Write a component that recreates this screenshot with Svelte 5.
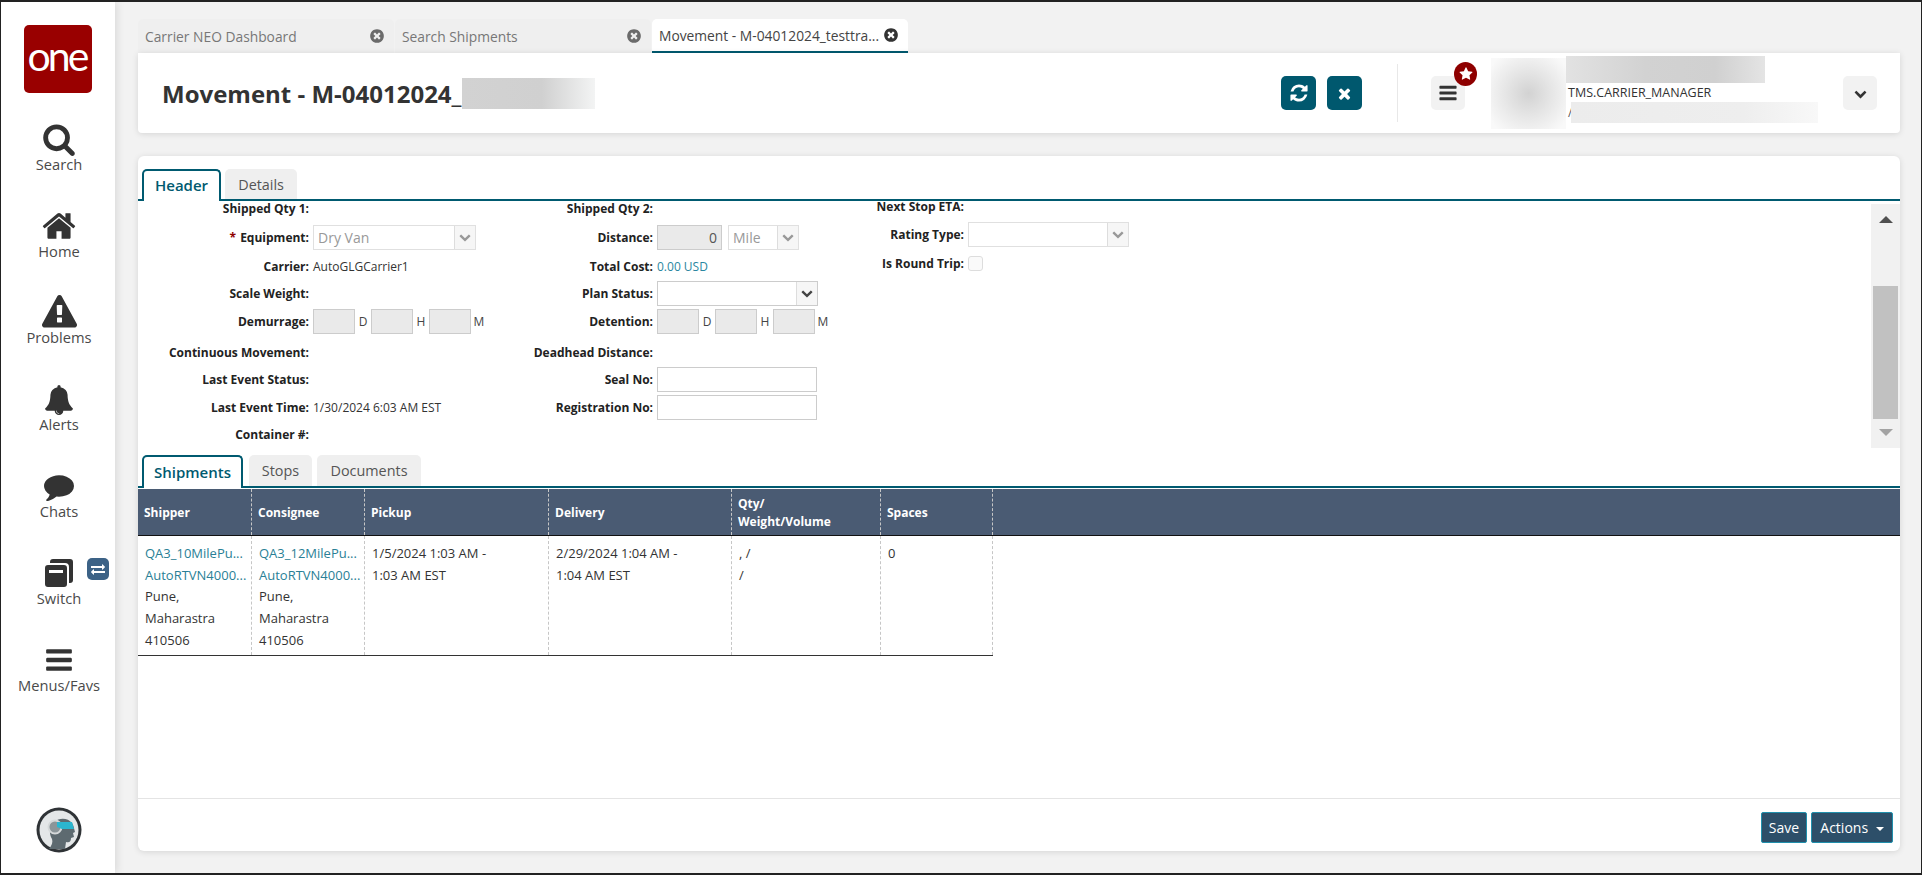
<script>
    const icons = {
        search: 'M1216 832q0-185-131.500-316.500t-316.500-131.500-316.500 131.500-131.500 316.500 131.500 316.500 316.500 131.500 316.500-131.500 131.500-316.500zm512 832q0 52-38 90t-90 38q-54 0-90-38l-343-342q-179 124-399 124-143 0-273.500-55.500t-225-150-150-225-55.500-273.500 55.500-273.500 150-225 225-150 273.500-55.500 273.500 55.500 225 150 150 225 55.500 273.500q0 220-124 399l343 343q37 37 37 90z',
        home: 'M1472 992v480q0 26-19 45t-45 19h-384v-384h-256v384h-384q-26 0-45-19t-19-45v-480q0-1 .5-3t.5-3l575-474 575 474q1 2 1 6zm223-69l-62 74q-8 9-21 11h-3q-13 0-21-7l-692-577-692 577q-12 8-24 7-13-2-21-11l-62-74q-8-10-7-23.500t11-21.500l719-599q32-26 76-26t76 26l244 204v-195q0-14 9-23t23-9h192q14 0 23 9t9 23v408l219 182q10 8 11 21.500t-7 23.500z',
        warning: 'M1024 1375v-190q0-14-9.500-23.500t-22.500-9.500h-192q-13 0-22.500 9.500t-9.500 23.500v190q0 14 9.500 23.500t22.500 9.500h192q13 0 22.500-9.500t9.500-23.500zm-2-374l18-459q0-12-10-19-13-11-24-11h-220q-11 0-24 11-10 7-10 21l17 457q0 10 10 16.500t24 6.500h185q14 0 23.500-6.500t10.500-16.500zm-14-934l768 1408q35 63-2 126-17 29-46.500 46t-63.500 17h-1536q-34 0-63.500-17t-46.500-46q-37-63-2-126l768-1408q17-31 47-49t65-18 65 18 47 49z',
        bell: 'M912 1696q0-16-16-16-59 0-101.500-42.500t-42.500-101.500q0-16-16-16t-16 16q0 73 51.500 124.500t124.500 51.500q16 0 16-16zm816-288q0 52-38 90t-90 38h-448q0 106-75 181t-181 75-181-75-75-181h-448q-52 0-90-38t-38-90q50-42 91-88t85-119.500 74.500-158.500 50-206 19.500-260q0-152 117-282.500t307-158.500q-8-19-8-39 0-40 28-68t68-28 68 28 28 68q0 20-8 39 190 28 307 158.500t117 282.500q0 139 19.500 260t50 206 74.500 158.500 85 119.500 91 88z',
        comment: 'M1792 896q0 174-120 321.500t-326 233-450 85.500q-70 0-145-8-198 175-460 242-49 14-114 22-17 2-30.500-9t-17.500-29v-1q-3-4-.5-12t2-10 4.500-9.500l6-9 7-8.500 8-9q7-8 31-34.500t34.500-38 31-39.500 32.500-51 27-59 26-76q-157-89-247.500-220t-90.500-281q0-130 71-248.500t191-204.500 286-136.500 348-50.500q244 0 450 85.500t326 233 120 321.500z',
        bars: 'M1664 1344v128q0 26-19 45t-45 19h-1408q-26 0-45-19t-19-45v-128q0-26 19-45t45-19h1408q26 0 45 19t19 45zm0-512v128q0 26-19 45t-45 19h-1408q-26 0-45-19t-19-45v-128q0-26 19-45t45-19h1408q26 0 45 19t19 45zm0-512v128q0 26-19 45t-45 19h-1408q-26 0-45-19t-19-45v-128q0-26 19-45t45-19h1408q26 0 45 19t19 45z',
        refresh: 'M1639 1056q0 5-1 7-64 268-268 434.500t-478 166.500q-146 0-282.500-55t-243.500-157l-129 129q-19 19-45 19t-45-19-19-45v-448q0-26 19-45t45-19h448q26 0 45 19t19 45-19 45l-137 137q71 66 161 102t187 36q134 0 250-65t186-179q11-17 53-117 8-23 30-23h192q13 0 22.500 9.500t9.500 22.500zm25-800v448q0 26-19 45t-45 19h-448q-26 0-45-19t-19-45 19-45l138-138q-148-137-349-137-134 0-250 65t-186 179q-11 17-53 117-8 23-30 23h-199q-13 0-22.500-9.500t-9.500-22.500v-7q65-268 270-434.500t480-166.500q146 0 284 55.500t245 156.500l130-129q19-19 45-19t45 19 19 45z',
        times: 'M1490 1322q0 40-28 68l-136 136q-28 28-68 28t-68-28l-294-294-294 294q-28 28-68 28t-68-28l-136-136q-28-28-28-68t28-68l294-294-294-294q-28-28-28-68t28-68l136-136q28-28 68-28t68 28l294 294 294-294q28-28 68-28t68 28l136 136q28 28 28 68t-28 68l-294 294 294 294q28 28 28 68z',
        star: 'M1728 647q0 22-26 48l-363 354 86 500q1 7 1 20 0 21-10.500 35.500t-30.500 14.500q-19 0-40-12l-449-236-449 236q-22 12-40 12-21 0-31.500-14.500t-10.500-35.500q0-6 2-20l86-500-364-354q-25-27-25-48 0-37 56-46l502-73 225-455q19-41 49-41t49 41l225 455 502 73q56 9 56 46z',
        chevron: 'M1683 808l-742 741q-19 19-45 19t-45-19l-742-741q-19-19-19-45.500t19-45.500l166-165q19-19 45-19t45 19l531 531 531-531q19-19 45-19t45 19l166 165q19 19 19 45.500t-19 45.500z',
        timesCircle: 'M1277 1122q0-26-19-45l-181-181 181-181q19-19 19-45 0-27-19-46l-90-90q-19-19-46-19-26 0-45 19l-181 181-181-181q-19-19-45-19-27 0-46 19l-90 90q-19 19-19 46 0 26 19 45l181 181-181 181q-19 19-19 45 0 27 19 46l90 90q19 19 46 19 26 0 45-19l181-181 181 181q19 19 45 19 27 0 46-19l90-90q19-19 19-46zm387-226q0 209-103 385.500t-279.500 279.500-385.500 103-385.500-103-279.500-279.500-103-385.500 103-385.500 279.500-279.500 385.500-103 385.500 103 279.500 279.500 103 385.500z',
        exchange: 'M1792 1184v192q0 13-9.500 22.500t-22.500 9.500h-1376v192q0 13-9.500 22.500t-22.500 9.500q-12 0-24-10l-319-320q-9-9-9-22 0-14 9-23l320-320q9-9 23-9 13 0 22.500 9.500t9.500 22.500v192h1376q13 0 22.500 9.500t9.500 22.500zm0-544q0 14-9 23l-320 320q-9 9-23 9-13 0-22.500-9.500t-9.500-22.500v-192h-1376q-13 0-22.500-9.500t-9.500-22.500v-192q0-13 9.500-22.500t22.500-9.500h1376v-192q0-14 9-23t23-9q12 0 24 10l319 319q9 9 9 23z'
    };

    const navItems = [
        { id: 'search', label: 'Search', icon: icons.search, size: 34 },
        { id: 'home', label: 'Home', icon: icons.home, size: 36 },
        { id: 'problems', label: 'Problems', icon: icons.warning, size: 35 },
        { id: 'alerts', label: 'Alerts', icon: icons.bell, size: 30 },
        { id: 'chats', label: 'Chats', icon: icons.comment, size: 30 },
        { id: 'switch', label: 'Switch', icon: null, size: 30 },
        { id: 'menus', label: 'Menus/Favs', icon: icons.bars, size: 30 }
    ];

    const pageTabs = [
        { label: 'Carrier NEO Dashboard' },
        { label: 'Search Shipments' },
        { label: 'Movement - M-04012024_testtra...', active: true }
    ];

    const columns = ['Shipper', 'Consignee', 'Pickup', 'Delivery', 'Qty/\nWeight/Volume', 'Spaces'];
</script>

{#snippet icon(d, size)}
    <svg class="fa" width={size} height={size} viewBox="0 0 1792 1792" aria-hidden="true"><path d={d} /></svg>
{/snippet}

{#snippet combo(value, cls)}
    <div class="combo {cls}">
        <span class="combo-value">{value}</span>
        <span class="combo-btn">{@render icon(icons.chevron, 12)}</span>
    </div>
{/snippet}

{#snippet duration()}
    <div class="duration">
        <span class="box ro short"></span><span class="unit">D</span>
        <span class="box ro short"></span><span class="unit">H</span>
        <span class="box ro short"></span><span class="unit">M</span>
    </div>
{/snippet}

<div class="frame">
    <aside class="sidebar">
        <div class="logo"><span>one</span></div>
        <nav class="nav">
            {#each navItems as item}
                <a class="nav-item" href="#{item.id}" id="nav-{item.id}">
                    <span class="nav-icon nav-icon-{item.id}">
                        {#if item.icon}
                            {@render icon(item.icon, item.size)}
                        {:else}
                            <svg width="30" height="30" viewBox="0 0 30 30" aria-hidden="true">
                                <path fill="#333" d="M9 1h17a3 3 0 0 1 3 3v18a3 3 0 0 1-3 3h-1V9a4 4 0 0 0-4-4H6V4a3 3 0 0 1 3-3z" />
                                <path fill="#333" fill-rule="evenodd" d="M4 7h16a3 3 0 0 1 3 3v16a3 3 0 0 1-3 3H4a3 3 0 0 1-3-3V10a3 3 0 0 1 3-3zm1 5v3h14v-3z" />
                            </svg>
                        {/if}
                    </span>
                    <span class="nav-label">{item.label}</span>
                    {#if item.id === 'switch'}
                        <span class="switch-badge">{@render icon(icons.exchange, 14)}</span>
                    {/if}
                </a>
            {/each}
        </nav>
        <div class="spacer"></div>
        <svg class="bot" width="46" height="46" viewBox="0 0 46 46" aria-hidden="true">
            <circle cx="23" cy="23" r="22.5" fill="#2f3336" />
            <circle cx="23" cy="23" r="19.500" fill="#e4e7e8" />
            <path fill="#5d6a70" d="M13 42c3-4 4-7 3-10-3-5-3-12 2-17 6-5 14-4 18 1 2 3 2 6 3 9l-2 1 1 4-3 1c0 3-1 5-5 4l-1 7z" />
            <circle cx="19" cy="20" r="6.500" fill="#8b9599" stroke="#d5d9da" stroke-width="2" />
            <path fill="#2bb6cf" d="M21 15h15l2 7H26l-5-2z" />
        </svg>
    </aside>

    <main class="main">
        <div class="page-tabs">
            {#each pageTabs as tab}
                <div class="page-tab" class:active={tab.active}>
                    <span>{tab.label}</span>
                    {@render icon(icons.timesCircle, 16)}
                </div>
            {/each}
        </div>

        <header class="head-card">
            <h1 class="title">Movement - M-04012024_<span class="smudge title-smudge"></span></h1>
            <div class="head-actions">
                <button class="teal-btn">{@render icon(icons.refresh, 20)}</button>
                <button class="teal-btn">{@render icon(icons.times, 17)}</button>
            </div>
            <div class="divider"></div>
            <button class="grey-btn menu-btn">
                {@render icon(icons.bars, 20)}
                <span class="star-badge">{@render icon(icons.star, 14)}</span>
            </button>
            <div class="smudge user-pic"></div>
            <div class="user-meta">
                <div class="smudge user-name"></div>
                <div class="user-role">TMS.CARRIER_MANAGER</div>
                <div class="user-org"><span>/</span><div class="smudge user-org-blur"></div></div>
            </div>
            <button class="grey-btn more-btn">{@render icon(icons.chevron, 13)}</button>
        </header>

        <section class="content-card">
            <div class="tabs">
                <div class="tab active">Header</div>
                <div class="tab details-tab">Details</div>
            </div>

            <div class="form-wrap">
                <div class="form">
                    <div class="col col-a">
                        <div class="lbl">Shipped Qty 1:</div><div></div>
                        <div class="lbl"><i>*</i> Equipment:</div><div>{@render combo('Dry Van', 'off equipment')}</div>
                        <div class="lbl">Carrier:</div><div class="val">AutoGLGCarrier1</div>
                        <div class="lbl">Scale Weight:</div><div></div>
                        <div class="lbl">Demurrage:</div><div>{@render duration()}</div>
                        <div class="lbl">Continuous Movement:</div><div></div>
                        <div class="lbl">Last Event Status:</div><div></div>
                        <div class="lbl">Last Event Time:</div><div class="val">1/30/2024 6:03 AM EST</div>
                        <div class="lbl">Container #:</div><div></div>
                    </div>
                    <div class="col col-b">
                        <div class="lbl">Shipped Qty 2:</div><div></div>
                        <div class="lbl">Distance:</div>
                        <div class="inline"><span class="box ro distance">0</span>{@render combo('Mile', 'off mile')}</div>
                        <div class="lbl">Total Cost:</div><div class="val money">0.00 USD</div>
                        <div class="lbl">Plan Status:</div><div>{@render combo('', 'plan')}</div>
                        <div class="lbl">Detention:</div><div>{@render duration()}</div>
                        <div class="lbl">Deadhead Distance:</div><div></div>
                        <div class="lbl">Seal No:</div><div><span class="box wide"></span></div>
                        <div class="lbl">Registration No:</div><div><span class="box wide"></span></div>
                    </div>
                    <div class="col col-c">
                        <div class="lbl">Next Stop ETA:</div><div></div>
                        <div class="lbl">Rating Type:</div><div>{@render combo('', 'off rating')}</div>
                        <div class="lbl">Is Round Trip:</div><div><span class="check"></span></div>
                    </div>
                </div>
                <div class="scrollbar">
                    <span class="arrow up"></span>
                    <span class="thumb"></span>
                    <span class="arrow down"></span>
                </div>
            </div>

            <div class="tabs sub-tabs">
                <div class="tab active">Shipments</div>
                <div class="tab stops-tab">Stops</div>
                <div class="tab docs-tab">Documents</div>
            </div>

            <div class="table">
                <div class="thead">
                    {#each columns as col}
                        <div class="th">{col}</div>
                    {/each}
                    <div class="th last"></div>
                </div>
                <div class="tbody">
                    <div class="td">
                        <a href="#shipper">QA3_10MilePu...</a>
                        <a href="#shipper-org">AutoRTVN4000...</a>
                        Pune,<br />Maharastra<br />410506
                    </div>
                    <div class="td">
                        <a href="#consignee">QA3_12MilePu...</a>
                        <a href="#consignee-org">AutoRTVN4000...</a>
                        Pune,<br />Maharastra<br />410506
                    </div>
                    <div class="td">1/5/2024 1:03 AM -<br />1:03 AM EST</div>
                    <div class="td">2/29/2024 1:04 AM -<br />1:04 AM EST</div>
                    <div class="td">, /<br />/</div>
                    <div class="td">0</div>
                </div>
            </div>

            <footer class="footer">
                <button class="foot-btn">Save</button>
                <button class="foot-btn actions">Actions <span class="caret"></span></button>
            </footer>
        </section>
    </main>
</div>

<style>
    :global(body) {
        margin: 0;
        background: #f2f2f2;
        font-family: "Open Sans", "Noto Sans", sans-serif;
        color: #333;
    }

    .frame {
        width: 1922px;
        height: 875px;
        box-sizing: border-box;
        border-style: solid;
        border-color: #222;
        border-width: 2px 1px 2px 1px;
        display: flex;
        overflow: hidden;
        background: #f2f2f2;
    }

    .fa { fill: currentColor; display: block; }

    /* left rail */
    .sidebar {
        width: 114px;
        flex-shrink: 0;
        background: #fff;
        box-shadow: 2px 0 8px rgba(0, 0, 0, 0.1);
        display: flex;
        flex-direction: column;
        align-items: center;
        z-index: 1;
    }

    .logo {
        width: 68px;
        height: 68px;
        margin-top: 23px;
        background: #990000;
        border-radius: 5px;
        color: #fff;
        display: flex;
        align-items: center;
        justify-content: center;
        flex-shrink: 0;
    }

    .logo span {
        font-family: "Lato", sans-serif;
        font-size: 41px;
        line-height: 1;
        letter-spacing: -3px;
        margin-top: -7px;
        margin-left: -2px;
    }

    .nav { display: flex; flex-direction: column; align-self: stretch; }

    .nav-item {
        position: relative;
        height: 86.8px;
        box-sizing: border-box;
        padding-bottom: 8px;
        margin-left: 2px;
        display: flex;
        flex-direction: column;
        align-items: center;
        justify-content: flex-end;
        text-decoration: none;
        color: #333;
    }

    .nav-icon {
        height: 34px;
        display: flex;
        align-items: center;
        justify-content: center;
    }

    .nav-icon-alerts { margin-bottom: -1px; }

    .nav-label {
        font-size: 14.7px;
        line-height: 16px;
        color: #4a4a4a;
    }

    .switch-badge {
        position: absolute;
        left: 84px;
        top: 31px;
        width: 22px;
        height: 22px;
        border-radius: 5px;
        background: #3c6286;
        color: #fff;
        display: flex;
        align-items: center;
        justify-content: center;
    }

    .spacer { flex: 1; }
    .bot { margin-bottom: 20px; margin-left: 2px; flex-shrink: 0; }

    /* main column */
    .main {
        flex: 1;
        min-width: 0;
        display: flex;
        flex-direction: column;
        padding: 17px 21px 22px 23px;
    }

    .page-tabs { display: flex; height: 34px; gap: 1px; }

    .page-tab {
        width: 256px;
        box-sizing: border-box;
        padding: 0 9px 0 7px;
        display: flex;
        align-items: center;
        justify-content: space-between;
        background: #efefef;
        border-radius: 5px 5px 0 0;
        font-size: 13.8px;
        color: #777;
    }

    .page-tab .fa { color: #6b6b6b; }

    .page-tab.active {
        background: #fff;
        color: #444;
        border-bottom: 2px solid #005a70;
    }

    .page-tab.active .fa { color: #333; }

    .head-card {
        height: 80px;
        background: #fff;
        border-radius: 0 0 4px 4px;
        box-shadow: 0 1px 6px rgba(0, 0, 0, 0.12);
        display: flex;
        align-items: center;
        padding: 0 23px 0 24px;
        margin-bottom: 23px;
        flex-shrink: 0;
    }

    .title {
        margin: 0;
        font-size: 24px;
        font-weight: 700;
        color: #333;
        display: flex;
        align-items: center;
        white-space: nowrap;
    }

    .smudge { background: #ddd; }

    .title-smudge {
        width: 133px;
        height: 31px;
        margin-left: 1px;
        background: linear-gradient(90deg, #d2d2d2 0%, #d0d0d0 60%, #f3f4f4 100%);
    }

    .head-actions {
        margin-left: auto;
        display: flex;
        gap: 11px;
    }

    .teal-btn {
        width: 35px;
        height: 34px;
        padding: 0;
        border: none;
        border-radius: 5px;
        background: #00586e;
        color: #fff;
        display: flex;
        align-items: center;
        justify-content: center;
    }

    .divider {
        width: 1px;
        height: 58px;
        background: #e8e8e8;
        margin: 0 33px 0 35px;
    }

    .grey-btn {
        width: 34px;
        height: 34px;
        padding: 0;
        border: none;
        border-radius: 5px;
        background: #f2f2f2;
        color: #333;
        display: flex;
        align-items: center;
        justify-content: center;
        position: relative;
    }

    .star-badge {
        position: absolute;
        left: 23px;
        top: -14px;
        width: 23px;
        height: 24px;
        border-radius: 50%;
        background: #8e0000;
        color: #fff;
        display: flex;
        align-items: center;
        justify-content: center;
    }

    .user-pic {
        width: 75px;
        height: 71px;
        margin-left: 26px;
        background: radial-gradient(circle at 50% 50%, #d2d2d2 0%, #e6e6e6 45%, #f9f9f9 90%);
    }

    .user-meta {
        width: 252px;
        align-self: flex-start;
        margin-top: 3px;
    }

    .user-name {
        width: 199px;
        height: 27px;
        background: linear-gradient(90deg, #e2e2e2 0%, #d2d2d2 40%, #d0d0d0 75%, #e4e4e4 100%);
    }

    .user-role {
        height: 19px;
        line-height: 19px;
        padding-left: 2px;
        font-size: 12.5px;
        color: #333;
    }

    .user-org {
        display: flex;
        padding-left: 2px;
        font-size: 12px;
        line-height: 21px;
        color: #555;
    }

    .user-org-blur {
        margin-left: -1px;
        flex: 1;
        height: 21px;
        background: linear-gradient(90deg, #ececec 0%, #eeeeee 70%, #f8f8f8 100%);
    }

    .more-btn { margin-left: 25px; }

    /* lower card */
    .content-card {
        flex: 1;
        min-height: 0;
        background: #fff;
        border-radius: 6px;
        box-shadow: 0 1px 6px rgba(0, 0, 0, 0.12);
        display: flex;
        flex-direction: column;
        padding-top: 13px;
    }

    .tabs {
        height: 32px;
        box-sizing: border-box;
        display: flex;
        padding-left: 4px;
        border-bottom: 2px solid #005a70;
        flex-shrink: 0;
    }

    .tab {
        height: 30px;
        box-sizing: border-box;
        padding: 1px 14px 0;
        display: flex;
        align-items: center;
        background: #efefef;
        border-radius: 5px 5px 0 0;
        font-size: 14.4px;
        color: #555;
        margin-left: 4px;
    }

    .tab.active {
        height: 32px;
        margin-left: 0;
        background: #fff;
        color: #005a70;
        font-weight: 600;
        font-size: 15px;
        border: 2px solid #005a70;
        border-bottom: none;
        padding: 0 11px 2px;
    }

    .details-tab { width: 72px; justify-content: center; padding: 0; }
    .stops-tab { width: 63px; justify-content: center; padding: 0; margin-left: 6px; }
    .docs-tab { width: 104px; justify-content: center; padding: 0; margin-left: 5px; }

    .form-wrap {
        height: 247px;
        display: flex;
        flex-shrink: 0;
    }

    .form {
        flex: 1;
        display: flex;
        overflow: hidden;
        align-items: flex-start;
    }

    .col {
        display: grid;
        column-gap: 4px;
        align-items: center;
        margin-top: -7.5px;
        grid-template-rows: 29px 29px 29px 25px 31px 31px 23px 33px 21px;
        flex-shrink: 0;
    }

    .col-a { width: 342px; grid-template-columns: 171px 1fr; }
    .col-b { width: 350px; grid-template-columns: 173px 1fr; }

    .col-c {
        width: 400px;
        grid-template-columns: 134px 1fr;
        grid-template-rows: 29px 27px 31px;
        margin-top: -9.5px;
    }

    .lbl {
        text-align: right;
        font-size: 12px;
        font-weight: 700;
        color: #222;
        white-space: nowrap;
    }

    .lbl i { font-style: normal; color: #8e0000; margin-right: 1px; }

    .val { font-size: 12px; color: #333; }
    .money { color: #2a86a0; }

    .inline { display: flex; gap: 6px; }

    .combo {
        height: 25px;
        box-sizing: border-box;
        border: 1px solid #ccc;
        display: flex;
        background: #fff;
        font-size: 14px;
        color: #555;
    }

    .combo-value {
        flex: 1;
        padding-left: 4px;
        line-height: 23px;
    }

    .combo-btn {
        width: 20px;
        display: flex;
        align-items: center;
        justify-content: center;
        border-left: 1px solid #ddd;
        background: #f6f6f6;
        color: #444;
    }

    .combo.off { border-color: #e0e0e0; color: #999; }
    .combo.off .combo-btn { color: #999; }

    .equipment { width: 163px; }
    .mile { width: 71px; }
    .plan { width: 161px; }
    .rating { width: 161px; }

    .box {
        display: block;
        height: 25px;
        box-sizing: border-box;
        border: 1px solid #ccc;
        background: #fff;
    }

    .ro { background: #eaeaea; }
    .short { width: 42px; }
    .wide { width: 160px; height: 25px; }

    .distance {
        width: 65px;
        text-align: right;
        padding-right: 4px;
        font-size: 14px;
        line-height: 23px;
        color: #555;
    }

    .duration { display: flex; align-items: center; }

    .unit {
        width: 16px;
        text-align: center;
        font-size: 12px;
        color: #444;
    }

    .check {
        display: block;
        width: 15px;
        height: 15px;
        box-sizing: border-box;
        border: 1px solid #ddd;
        border-radius: 3px;
        background: #fafafa;
    }

    .scrollbar {
        width: 29px;
        margin-top: 3px;
        background: #f1f1f1;
        display: flex;
        flex-direction: column;
        align-items: center;
        flex-shrink: 0;
    }

    .arrow {
        width: 0;
        height: 0;
        border-left: 7px solid transparent;
        border-right: 7px solid transparent;
    }

    .arrow.up {
        border-bottom: 7px solid #505050;
        margin-top: 12px;
    }

    .arrow.down {
        border-top: 7px solid #a3a3a3;
        margin-top: 10px;
    }

    .thumb {
        width: 25px;
        height: 133px;
        margin-top: 63px;
        background: #c1c1c1;
    }

    .sub-tabs { margin-top: 7px; height: 33px; }
    .sub-tabs .tab { height: 31px; }
    .sub-tabs .tab.active { height: 33px; width: 101px; justify-content: center; padding: 0 0 2px; }

    .table { flex: 1; min-height: 0; margin-top: 1px; }

    .thead {
        height: 47px;
        box-sizing: border-box;
        background: #4a5b73;
        border-bottom: 1px solid #111;
        display: grid;
        grid-template-columns: 114px 113px 184px 183px 149px 112px 1fr;
    }

    .th {
        padding: 2px 5px 0 6px;
        display: flex;
        align-items: center;
        white-space: pre-line;
        font-size: 12px;
        line-height: 18px;
        font-weight: 700;
        color: #fff;
        border-right: 1px dashed #c6c6c6;
    }

    .th.last { border-right: none; }

    .tbody {
        width: 855px;
        height: 120px;
        box-sizing: border-box;
        border-bottom: 1px solid #333;
        display: grid;
        grid-template-columns: 114px 113px 184px 183px 149px 112px;
    }

    .td {
        padding: 7px 0 0 7px;
        font-size: 13px;
        line-height: 21.7px;
        color: #333;
        border-right: 1px dashed #c6c6c6;
        white-space: nowrap;
    }

    .td a {
        display: block;
        color: #2a7f96;
        text-decoration: none;
    }

    .footer {
        height: 53px;
        box-sizing: border-box;
        border-top: 1px solid #e4e4e4;
        display: flex;
        justify-content: flex-end;
        align-items: flex-start;
        gap: 4px;
        padding: 13px 7px 0 0;
        flex-shrink: 0;
    }

    .foot-btn {
        height: 31px;
        width: 46px;
        padding: 0;
        border: 1px solid #2090ad;
        border-radius: 2px;
        background: #2d4f69;
        color: #fff;
        font-family: inherit;
        font-size: 14px;
    }

    .actions { width: 82px; }

    .caret {
        display: inline-block;
        width: 0;
        height: 0;
        margin-left: 4px;
        vertical-align: middle;
        border-left: 4px solid transparent;
        border-right: 4px solid transparent;
        border-top: 4px solid #fff;
    }
</style>
